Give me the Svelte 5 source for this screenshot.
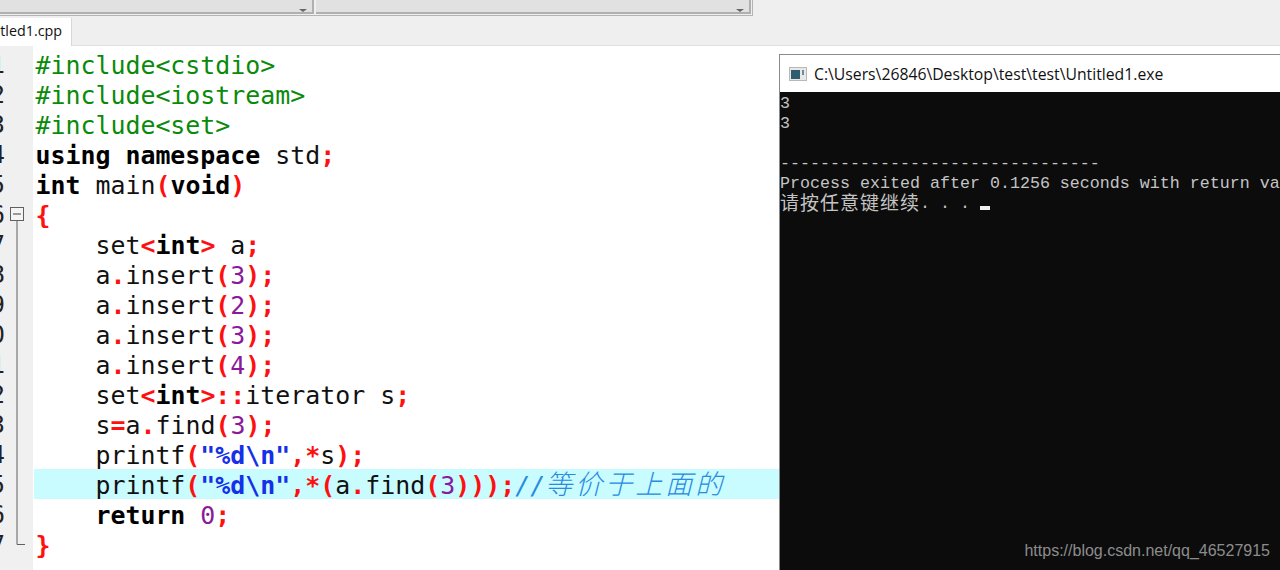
<script>
  // tokens: g include, b bold word, p punctuation, n number, s string, c comment, plain text has no class
  const lines = [
    [['g', '#include<cstdio>']],
    [['g', '#include<iostream>']],
    [['g', '#include<set>']],
    [['b', 'using namespace'], ['', ' std'], ['p', ';']],
    [['b', 'int'], ['', ' main'], ['p', '('], ['b', 'void'], ['p', ')']],
    [['p', '{']],
    [['', '    set'], ['p', '<'], ['b', 'int'], ['p', '>'], ['', ' a'], ['p', ';']],
    [['', '    a'], ['p', '.'], ['', 'insert'], ['p', '('], ['n', '3'], ['p', ');']],
    [['', '    a'], ['p', '.'], ['', 'insert'], ['p', '('], ['n', '2'], ['p', ');']],
    [['', '    a'], ['p', '.'], ['', 'insert'], ['p', '('], ['n', '3'], ['p', ');']],
    [['', '    a'], ['p', '.'], ['', 'insert'], ['p', '('], ['n', '4'], ['p', ');']],
    [['', '    set'], ['p', '<'], ['b', 'int'], ['p', '>::'], ['', 'iterator s'], ['p', ';']],
    [['', '    s'], ['p', '='], ['', 'a'], ['p', '.'], ['', 'find'], ['p', '('], ['n', '3'], ['p', ');']],
    [['', '    printf'], ['p', '('], ['s', '"%d\\n"'], ['p', ',*'], ['', 's'], ['p', ');']],
    [['', '    printf'], ['p', '('], ['s', '"%d\\n"'], ['p', ',*('], ['', 'a'], ['p', '.'], ['', 'find'], ['p', '('], ['n', '3'], ['p', ')));'], ['c', '//'], ['cjk', '等价于上面的']],
    [['b', '    return'], ['', ' '], ['n', '0'], ['p', ';']],
    [['p', '}']]
  ];
  const activeLine = 14;
</script>

<div class="ide">
  <div class="toolbar">
    <div class="combos">
      <div class="combo first"><span class="arrow"></span></div>
      <div class="combo second"><span class="arrow"></span></div>
    </div>
  </div>

  <div class="tabs">
    <div class="tab"><span>Untitled1.cpp</span></div>
  </div>

  <div class="editor">
    <div class="gutter">
      <div class="numbers">
        {#each lines as _, i}
          <div class="num">{i + 1}</div>
        {/each}
      </div>
      <div class="fold">
        <svg width="20" height="360" viewBox="0 0 20 360">
          <rect x="0.5" y="0.5" width="13" height="13" fill="#f4f4f4" stroke="#606060" />
          <path d="M3 7h8" stroke="#404040" fill="none" />
          <path d="M7 14V337.500H15" stroke="#606060" fill="none" />
        </svg>
      </div>
    </div>
    <div class="code">
      {#each lines as line, i}
        <div class="line" class:active={i === activeLine}>{#each line as [cls, text]}<span class={cls}>{text}</span>{/each}</div>
      {/each}
    </div>
  </div>

  <div class="console">
    <div class="titlebar">
      <svg class="icon" width="18" height="14" viewBox="0 0 18 14">
        <rect x="0.500" y="0.500" width="17" height="13" fill="#e8e8e8" stroke="#b8b8b8" />
        <rect x="2" y="3" width="9" height="9" fill="#2f5d6e" />
        <rect x="13" y="3" width="2" height="5" fill="#6a8f9c" />
      </svg>
      <span>C:\Users\26846\Desktop\test\test\Untitled1.exe</span>
    </div>
    <div class="output">
      <div>3</div>
      <div>3</div>
      <div>&nbsp;</div>
      <div>--------------------------------</div>
      <div>Process exited after 0.1256 seconds with return value 0</div>
      <div><span class="zh">请按任意键继续</span>. . . <span class="cursor"></span></div>
    </div>
    <div class="mark">https://blog.csdn.net/qq_46527915</div>
  </div>
</div>

<style>
  :global(body) {
    background: #fff;
    overflow: hidden;
  }

  .ide {
    position: relative;
    width: 1280px;
    height: 570px;
    overflow: hidden;
    background: #fff;
  }

  .toolbar {
    height: 18px;
    background: #efefef;
  }

  .combos {
    display: flex;
    gap: 2px;
    width: 753px;
    height: 16px;
    padding-right: 1px;
    box-sizing: border-box;
    border-right: 1px solid #b4b4b4;
    border-bottom: 1px solid #b4b4b4;
  }

  .combo {
    position: relative;
    height: 12px;
    background: #e1e1e1;
    border-right: 2px solid #b0b0b0;
    border-bottom: 2px solid #b0b0b0;
  }

  .first { width: 312px; }
  .second { width: 433px; }

  .arrow {
    position: absolute;
    right: 5px;
    bottom: 0;
    width: 0;
    height: 0;
    border-left: 4px solid transparent;
    border-right: 4px solid transparent;
    border-top: 3px solid #666;
  }

  .tabs {
    height: 27px;
    background: #efefef;
    border-bottom: 1px solid #e0e0e0;
    box-sizing: content-box;
  }

  .tab {
    display: flex;
    justify-content: flex-end;
    align-items: center;
    width: 72px;
    height: 28px;
    padding-right: 9px;
    padding-bottom: 3px;
    box-sizing: border-box;
    overflow: hidden;
    white-space: nowrap;
    background: #fff;
    border-right: 1px solid #d8d8d8;
    font: 14.3px "Open Sans", "Noto Sans", sans-serif;
    color: #111;
  }

  .editor {
    display: flex;
    height: 524px;
  }

  .gutter {
    position: relative;
    flex: 0 0 33px;
    background: #f0f0f0;
    padding-top: 3px;
  }

  .numbers {
    width: 5px;
    overflow: hidden;
    font: 24px/27px "DejaVu Sans Mono", monospace;
    color: #222;
  }

  .num {
    display: flex;
    justify-content: flex-end;
    height: 27px;
    padding-top: 3px;
    white-space: nowrap;
  }

  .fold {
    position: absolute;
    left: 10px;
    top: 161px;
    line-height: 0;
  }

  .code {
    flex: 1;
    padding-top: 3px;
    min-width: 0;
    font: 24.9px/27px "DejaVu Sans Mono", monospace;
    color: #111;
  }

  .line {
    height: 27px;
    padding-top: 3px;
    padding-left: 1.500px;
    margin-left: 1px;
    white-space: pre;
  }

  .active {
    background: #c8fcff;
  }

  .g { color: #0a8a0a; }
  .b { font-weight: bold; color: #000; }
  .p { font-weight: bold; color: #ff1010; }
  .n { color: #8a1a9a; }
  .s { font-weight: bold; color: #1530e8; }
  .c { font-style: italic; color: #2a8ae0; }
  .cjk {
    font: italic 300 27px/0 "Noto Sans CJK SC", sans-serif;
    letter-spacing: 3px;
    color: #2a8ae0;
  }

  /* floating run window over the editor */
  .console {
    position: absolute;
    left: 779px;
    top: 54px;
    width: 501px;
    height: 516px;
    box-sizing: border-box;
    border-top: 1px solid #8a8a8a;
    border-left: 1px solid #8a8a8a;
    display: flex;
    flex-direction: column;
  }

  .titlebar {
    display: flex;
    align-items: center;
    gap: 7px;
    height: 37px;
    padding-left: 9px;
    background: #fff;
    font: 15.75px "Open Sans", "Noto Sans", sans-serif;
    color: #111;
    white-space: nowrap;
  }

  .icon { flex: none; }

  .output {
    flex: 1;
    padding-top: 2px;
    overflow: hidden;
    background: #0c0c0c;
    color: #c4c4c4;
    font: 16.67px/20px "Liberation Mono", monospace;
  }

  .output div {
    height: 20px;
    white-space: pre;
  }

  .zh {
    font: 19px/0 "Noto Sans CJK SC", sans-serif;
    letter-spacing: 1px;
    vertical-align: -2px;
  }

  .cursor {
    display: inline-block;
    width: 10px;
    height: 4px;
    background: #f0f0f0;
    vertical-align: -2px;
  }

  .mark {
    position: absolute;
    right: 10px;
    bottom: 10px;
    font: 16px "Liberation Sans", Arial, sans-serif;
    color: #8c8c8c;
  }
</style>
